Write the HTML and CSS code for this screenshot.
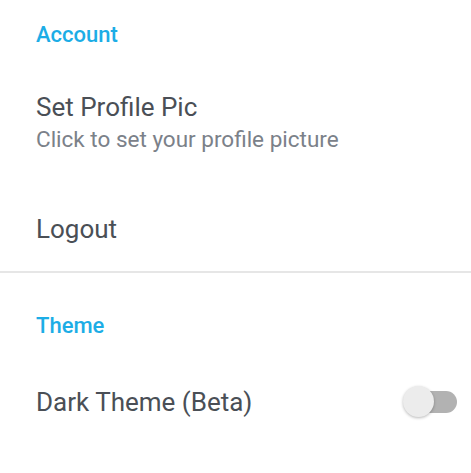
FILE: index.html
```html
<!DOCTYPE html>
<html>
<head>
<meta charset="utf-8">
<link rel="stylesheet" href="styles.css">
</head>
<body>
<div class="screen">
  <section class="group">
    <h2 class="group-title">Account</h2>
    <div class="pref pref-first">
      <div class="pref-text">
        <div class="pref-title">Set Profile Pic</div>
        <div class="pref-summary">Click to set your profile picture</div>
      </div>
    </div>
    <div class="pref pref-last">
      <div class="pref-text">
        <div class="pref-title">Logout</div>
      </div>
    </div>
  </section>
  <div class="divider"></div>
  <section class="group">
    <h2 class="group-title group-title-second">Theme</h2>
    <div class="pref pref-switch">
      <div class="pref-text">
        <div class="pref-title">Dark Theme (Beta)</div>
      </div>
      <div class="switch">
        <div class="switch-track"></div>
        <div class="switch-thumb"></div>
      </div>
    </div>
  </section>
</div>
</body>
</html>
```
FILE: styles.css
```css
html, body {
  margin: 0;
  padding: 0;
  background: #ffffff;
}
body {
  font-family: Roboto, "Noto Sans", "Liberation Sans", sans-serif;
  width: 471px;
  height: 473px;
  overflow: hidden;
}
.screen {
  display: flex;
  flex-direction: column;
}
.group-title {
  margin: 0;
  padding: 23px 36px 14px;
  font-size: 22px;
  line-height: 24px;
  font-weight: 500;
  color: #1cade6;
}
.group-title-second {
  padding-top: 41px;
}
.pref {
  display: flex;
  align-items: center;
  padding: 31px 14px 31px 36px;
}
.pref-last {
  padding-bottom: 27px;
}
.pref-switch {
  padding-top: 34px;
}
.pref-text {
  flex: 1;
  display: flex;
  flex-direction: column;
  gap: 4px;
}
.pref-title {
  font-size: 26px;
  line-height: 30px;
  color: #4a4f56;
}
.pref-summary {
  font-size: 22.5px;
  line-height: 26px;
  color: #7b8189;
}
.divider {
  height: 2px;
  background: #e6e6e6;
}
.switch {
  position: relative;
  width: 54px;
  height: 32px;
}
.switch-track {
  position: absolute;
  right: 0;
  top: 5px;
  width: 50px;
  height: 22px;
  border-radius: 11px;
  background: #b2b2b2;
}
.switch-thumb {
  position: absolute;
  left: 0;
  top: 0;
  width: 31px;
  height: 31px;
  border-radius: 50%;
  background: #ececec;
  box-shadow: 0 1px 3px rgba(0,0,0,0.28);
}
```
